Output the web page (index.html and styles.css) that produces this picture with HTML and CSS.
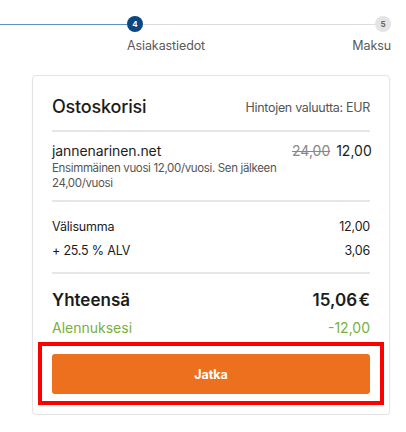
FILE: index.html
```html
<!DOCTYPE html>
<html lang="fi">
<head>
<meta charset="utf-8">
<link rel="stylesheet" href="styles.css">
</head>
<body>
<div class="stepper">
  <div class="line line-done first"></div>
  <div class="step step-start">
    <div class="dot dot-active">4</div>
    <div class="step-label">Asiakastiedot</div>
  </div>
  <div class="line line-todo"></div>
  <div class="step step-end">
    <div class="dot dot-todo">5</div>
    <div class="step-label">Maksu</div>
  </div>
</div>

<div class="card">
  <div class="card-head">
    <h2 class="title">Ostoskorisi</h2>
    <span class="currency">Hintojen valuutta: EUR</span>
  </div>
  <div class="divider"></div>
  <div class="item">
    <div class="item-info">
      <div class="item-name">jannenarinen.net</div>
      <div class="item-desc">Ensimmäinen vuosi 12,00/vuosi. Sen jälkeen 24,00/vuosi</div>
    </div>
    <div class="item-price"><s class="old">24,00</s> 12,00</div>
  </div>
  <div class="divider"></div>
  <div class="sums">
    <div class="row"><span>Välisumma</span><span>12,00</span></div>
    <div class="row"><span>+ 25.5 % ALV</span><span>3,06</span></div>
  </div>
  <div class="divider"></div>
  <div class="row total"><span>Yhteensä</span><span>15,06&#8202;€</span></div>
  <div class="row discount"><span>Alennuksesi</span><span>-12,00</span></div>
  <div class="highlight">
    <button class="btn">Jatka</button>
  </div>
</div>
</body>
</html>
```

FILE: styles.css
```css
* { box-sizing: border-box; }
html, body { margin: 0; padding: 0; background: #fff; }
body {
  font-family: Inter, "Open Sans", sans-serif;
  color: #1c1c1c;
  width: 406px;
}
.stepper {
  display: flex;
  align-items: flex-start;
  padding-top: 16px;
  padding-right: 15px;
  height: 75px;
}
.line {
  height: 1px;
  margin-top: 8px;
}
.first { width: 127px; }
.line-done { background: #5d8fc8; }
.line-todo { flex: 1; background: #dcdcdc; }
.step {
  width: 16px;
  display: flex;
  flex-direction: column;
}
.step-start { align-items: flex-start; }
.step-end { align-items: flex-end; }
.dot {
  width: 16px;
  height: 16px;
  border-radius: 50%;
  display: flex;
  align-items: center;
  justify-content: center;
  font-size: 8px;
  font-weight: 700;
}
.dot-active { background: #0b4783; color: #fff; }
.dot-todo { background: #e4e4e4; color: #666; }
.step-label {
  white-space: nowrap;
  font-size: 12.5px;
  color: #5a5a5a;
  margin-top: 6px;
  letter-spacing: -0.1px;
}
.card {
  margin-left: 32px;
  width: 358px;
  border: 1px solid #e4e4e4;
  border-radius: 4px;
  box-shadow: 0 1px 2px rgba(0,0,0,0.05);
  padding: 19px 19px 9px;
}
.card-head {
  display: flex;
  justify-content: space-between;
  align-items: center;
  padding-bottom: 11px;
}
.title {
  margin: 0;
  font-size: 18px;
  font-weight: 500;
  line-height: 24px;
  letter-spacing: -0.2px;
}
.currency {
  font-size: 12.5px;
  color: #555;
  letter-spacing: -0.3px;
}
.divider {
  height: 2px;
  background: #e6e6e6;
}
.item {
  display: flex;
  justify-content: space-between;
  padding: 10px 0 9px;
}
.item-name {
  font-size: 14px;
  line-height: 18px;
  letter-spacing: -0.1px;
}
.item-desc {
  font-size: 11.5px;
  line-height: 15px;
  color: #555;
  width: 240px;
  margin-top: 1px;
  letter-spacing: -0.35px;
}
.item-price {
  font-size: 14px;
  line-height: 18px;
  white-space: nowrap;
}
.old { color: #888; margin-right: 2px; }
.sums { padding: 17px 0 13px; }
.row {
  display: flex;
  justify-content: space-between;
  font-size: 12.5px;
  line-height: 16px;
}
.sums .row + .row { margin-top: 8px; }
.sums .row { letter-spacing: -0.2px; }
.total {
  font-size: 17px;
  font-weight: 600;
  line-height: 24px;
  margin-top: 14px;
}
.discount {
  color: #77b041;
  font-size: 14px;
  line-height: 18px;
  margin-top: 7px;
}
.highlight {
  margin: 5px -14px 0;
  border: 4px solid #ff0000;
  padding: 8px 10px 7px;
}
.btn {
  display: block;
  width: 100%;
  height: 40px;
  border: none;
  border-radius: 3px;
  background: #ec701e;
  color: #fff;
  font-family: inherit;
  font-size: 12.5px;
  font-weight: 700;
}
```
